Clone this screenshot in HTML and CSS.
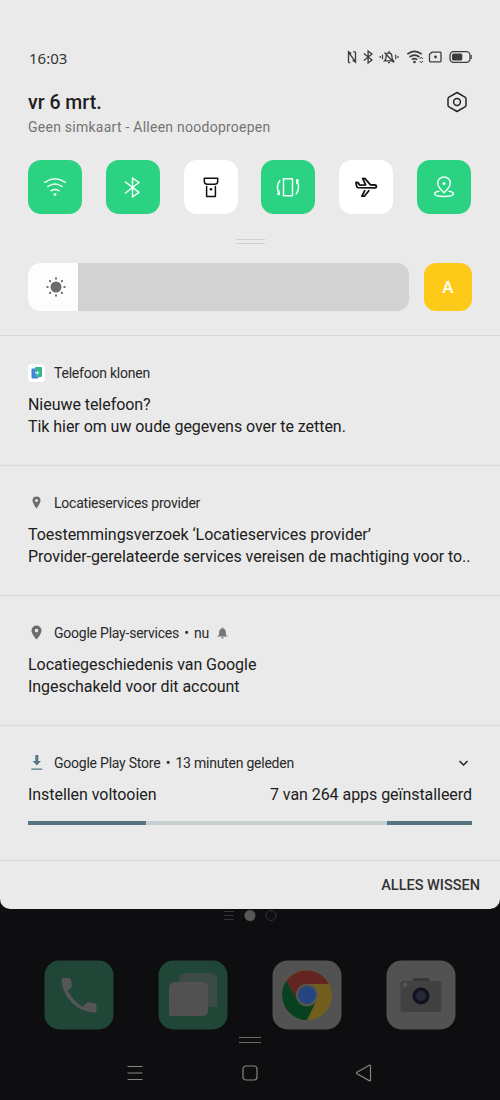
FILE: index.html
```html
<!DOCTYPE html>
<html lang="nl">
<head>
<meta charset="utf-8">
<title>Meldingen</title>
<link rel="stylesheet" href="styles.css">
</head>
<body>
<main class="phone">
  <section class="panel">
    <div class="status">
      <span class="time">16:03</span>
      <svg class="status-icons" width="130" height="16" viewBox="0 0 130 16" fill="none" stroke="#3c3c3c" stroke-width="1.3">
        <path d="M6.300 4.500 3.500 2.700V13.300L5.300 14M3.500 3.200 10.500 13V3.300L8.200 2.500M10.500 13 7.500 11.500"/>
        <path d="M18.800 4.500 27 11 23.100 14V2L27 5 18.800 11.500" stroke-width="1.300"/>
        <path d="M39.600 11.800h8.800c-1.500-1.300-1.400-2.500-1.500-4.700-.2-2.400-1.300-3.300-2.900-3.300s-2.700.9-2.900 3.300c-.1 2.200 0 3.400-1.500 4.700zM44 2v1.500M43 13.600h2M39.500 3.500l9.300 10" stroke-width="1.300"/>
        <path d="M37.500 5.800v4.500M35.200 7v2M50.700 5.800v4.500M53 7v2" stroke-width="1.200"/>
        <path d="M62.300 5.200Q69.500-.6 76.700 5.200M64.500 8Q69.500 4.200 74.500 8M66.800 10.600Q69.500 8.700 72.200 10.600" stroke-width="1.600"/>
        <circle cx="69.500" cy="13" r="1.300" fill="#3c3c3c" stroke="none"/>
        <path d="m74.700 10 1.600-1.800 1.600 1.800M74.700 12l1.600 1.800 1.600-1.800" stroke-width="1"/>
        <path d="M87 3.200h8.200q.8 0 .8.800v8q0 .8-.8.800H85.300q-.8 0-.8-.8V5.200z"/><circle cx="90.500" cy="8" r="1.400" fill="#3c3c3c" stroke="none"/>
        <rect x="105" y="2.600" width="20" height="10.800" rx="3.600"/><rect x="107" y="4.600" width="10.300" height="6.800" rx="1.500" fill="#3c3c3c" stroke="none"/><path d="M126.200 6v4" stroke-width="1.100"/>
      </svg>
    </div>
    <header class="heading">
      <div>
        <h1 class="date">vr 6 mrt.</h1>
        <p class="network">Geen simkaart - Alleen noodoproepen</p>
      </div>
      <svg class="settings" width="22" height="22" viewBox="0 0 22 22" fill="none" stroke="#252525" stroke-width="1.5" stroke-linejoin="round"><path d="m11 1.500 8 4.600q1 .6 1 1.600v6.600q0 1-1 1.600l-8 4.600-8-4.600q-1-.6-1-1.600V7.700q0-1 1-1.600z"/><circle cx="11" cy="11" r="3.400"/></svg>
    </header>
    <div class="tiles">
      <div class="tile on"><svg viewBox="0 0 54 54"><path d="M16.800 22.300Q27 15.200 37.200 22.300M19.800 26.500Q27 21.600 34.200 26.500M23 30.800Q27 28.200 31 30.800"/><circle class="solid" cx="27" cy="34.500" r="1.400"/></svg></div>
      <div class="tile on"><svg viewBox="0 0 54 54"><path d="M19.500 22 33 32.300 26.500 37V18L33 22.500 19.500 33"/></svg></div>
      <div class="tile"><svg viewBox="0 0 54 54"><path d="M20.300 18.200h13.400v3q0 3-3 3h-7.400q-3 0-3-3zM22.600 26.500v10h8.800v-10"/><circle class="solid" cx="27" cy="29.300" r="1.300"/></svg></div>
      <div class="tile on"><svg viewBox="0 0 54 54"><rect x="22.500" y="18.700" width="9" height="17"/><path d="M18.800 20.500q-4.600 6.500-.4 13.500M35.200 33.900q4.600-6.500.4-13.500"/><path class="solid" d="M18.900 30v5.300l-3.300-.8zM35.100 24.400v-5.300l3.300.8z"/></svg></div>
      <div class="tile dark-icon"><svg viewBox="0 0 54 54"><path d="m17 22.500 2 .1 1.600 2.500 6-.2-2.900-6.400 2.300.1 5.500 6.300 4.500.1q1.500.1 1.500 1.400t-1.500 1.400L19 27.700q-1.300-.2-1.400-1.700zM25.800 30.700l-2.900 5.500h2.500l4.400-5.500"/></svg></div>
      <div class="tile on"><svg viewBox="0 0 54 54"><path d="M27 32.700q-6.300-5.800-6.300-9.500a6.300 6.300 0 0 1 12.600 0q0 3.700-6.300 9.500z"/><circle class="solid" cx="27" cy="23.500" r="1.500"/><path d="M22 31.200q-4.500.8-4.500 2.600c0 3.600 19 3.600 19 0q0-1.800-4.500-2.600"/></svg></div>
    </div>
    <div class="grip"></div>
    <div class="brightness">
      <div class="slider"><div class="level"><svg width="22" height="22" viewBox="0 0 22 22"><circle cx="11" cy="11" r="5.500" fill="#6b6b6b"/><path d="M11 2v1M11 19v1M2 11h1M19 11h1M4.800 4.800l.6.600M16.600 16.600l.6.600M4.800 17.200l.6-.6M16.600 5.400l.6-.6" stroke="#444" stroke-width="1.500" stroke-linecap="round"/></svg></div></div>
      <div class="auto">A</div>
    </div>
    <article class="note">
      <div class="app"><svg class="app-icon" width="17" height="18" viewBox="0 0 17 18"><rect width="17" height="18" rx="4" fill="#fff"/><rect x="3.500" y="4.500" width="7" height="10" rx="1" fill="#467fe8"/><rect x="7" y="3" width="7" height="10" rx="1" fill="#32b58d"/><path d="M7 8h2V6.500L11.500 8.700 9 11V9.500H7z" fill="#c4eee8"/></svg><span class="name">Telefoon klonen</span></div>
      <p class="line">Nieuwe telefoon?</p>
      <p class="line">Tik hier om uw oude gegevens over te zetten.</p>
    </article>
    <article class="note">
      <div class="app"><svg class="app-icon" width="17" height="18" viewBox="0 0 17 18"><path fill="#6d6d6d" fill-rule="evenodd" d="M8.500 2.500a4 4 0 0 0-4 4c0 3 4 8 4 8s4-5 4-8a4 4 0 0 0-4-4zm0 2.500a1.500 1.500 0 1 1 0 3 1.500 1.500 0 0 1 0-3z"/></svg><span class="name">Locatieservices provider</span></div>
      <p class="line">Toestemmingsverzoek ‘Locatieservices provider’</p>
      <p class="line">Provider-gerelateerde services vereisen de machtiging voor to..</p>
    </article>
    <article class="note">
      <div class="app"><svg class="app-icon" width="17" height="18" viewBox="0 0 17 18"><path fill="#6d6d6d" fill-rule="evenodd" d="M8.500 1.500a5 5 0 0 0-5 5c0 3.700 5 9 5 9s5-5.300 5-9a5 5 0 0 0-5-5zm0 3.300a1.800 1.800 0 1 1 0 3.600 1.800 1.800 0 0 1 0-3.600z"/></svg><span class="name">Google Play-services</span><span class="name sep">•</span><span class="name">nu</span><svg class="bell" width="11" height="12" viewBox="0 0 11 12"><path fill="#777" d="M5.500.5q.8 0 .9 1 2.500.7 2.500 3.500v3l1.600 1v.6H.5V9l1.600-1V5q0-2.800 2.500-3.500 .1-1 .9-1zM4 10.300h3q-.3 1.300-1.500 1.300T4 10.300z"/></svg></div>
      <p class="line">Locatiegeschiedenis van Google</p>
      <p class="line">Ingeschakeld voor dit account</p>
    </article>
    <article class="note progress-note">
      <div class="app"><svg class="app-icon" width="17" height="18" viewBox="0 0 17 18"><path fill="#557984" d="M7.300 1h3v6h2.700l-4.200 4.500L4.600 7h2.700zM3.300 14.500h11v1.300h-11z"/></svg><span class="name">Google Play Store</span><span class="name sep">•</span><span class="name">13 minuten geleden</span><svg class="chevron" width="11" height="8" viewBox="0 0 11 8" fill="none" stroke="#222" stroke-width="1.500"><path d="m1.500 2 4 4 4-4"/></svg></div>
      <div class="progress-text"><p class="line">Instellen voltooien</p><p class="line">7 van 264 apps geïnstalleerd</p></div>
      <div class="bar"><span class="bar-start"></span><span class="bar-end"></span></div>
    </article>
    <footer class="clear"><span>ALLES WISSEN</span></footer>
  </section>
  <section class="home">
    <svg class="pages" width="54" height="14" viewBox="0 0 54 14" fill="none" stroke="#343436"><path d="M1 2.500h10M1 6.500h10M1 10.500h10"/><circle cx="27" cy="6.500" r="5.500" fill="#575757" stroke="none"/><circle cx="48" cy="6.500" r="5"/></svg>
    <div class="dock">
      <svg viewBox="0 0 70 70"><rect x=".5" y=".5" width="69" height="69" rx="15" fill="#1f4637"/><path fill="#565656" d="M19 18h6q1.500 0 2 1.500l.8 6q.1 1.500-1 2.500L23.500 30.500Q30 42 39 47l3.500-4q1-1 2.500-.8l6 1.200q1.500.4 1.500 2V51q0 1.500-1.500 1.500C33 52.500 18 36 17.500 19.500q0-1.500 1.500-1.500z"/></svg>
      <svg viewBox="0 0 70 70"><rect x=".5" y=".5" width="69" height="69" rx="15" fill="#1f4637"/><path fill="#3c4b46" d="M27 13h26q6 0 6 6v27q0 1-1 1H21V19q0-6 6-6z"/><path fill="#515151" d="M17 22h27q6 0 6 6v22q0 6-6 6H12q-1 0-1-1V28q0-6 6-6z"/></svg>
      <svg viewBox="0 0 70 70"><rect x=".5" y=".5" width="69" height="69" rx="15" fill="#525252"/><circle cx="35" cy="35" r="25" fill="#735f1d"/><path fill="#632522" d="M14.500 20.700A25 25 0 0 1 57 24H35a11 11 0 0 0-9.500 16.500z"/><path fill="#07411f" d="M14.500 20.700 25.500 40.500A11 11 0 0 0 43.500 42.500L35 60A25 25 0 0 1 14.500 20.700z"/><circle cx="35" cy="35" r="11" fill="#555"/><circle cx="35" cy="35" r="9" fill="#25457e"/></svg>
      <svg viewBox="0 0 70 70"><rect x=".5" y=".5" width="69" height="69" rx="15" fill="#525252"/><rect x="26.500" y="18" width="17" height="5" rx="1.500" fill="#383838"/><rect x="14.500" y="21" width="41" height="31" rx="3" fill="#414141"/><circle cx="19" cy="25" r="2.400" fill="#555"/><circle cx="35" cy="36" r="8.500" fill="#111120"/><circle cx="35" cy="36" r="5" fill="#282936"/></svg>
    </div>
    <div class="grip home-grip"></div>
    <nav class="nav">
      <svg width="16" height="16" viewBox="0 0 16 16"><path d="M.5 1.500h15M.5 8h15M.5 14.500h15"/></svg>
      <svg width="16" height="16" viewBox="0 0 16 16"><rect x="1" y="1" width="14" height="14" rx="3"/></svg>
      <svg width="16" height="16" viewBox="0 0 16 16"><path d="M1 7.200 13.200.3q1.300-.6 1.300.8v13.800q0 1.400-1.300.7L1 8.800q-1-.8 0-1.600z"/></svg>
    </nav>
  </section>
</main>
</body>
</html>
```

FILE: styles.css
```css
* { box-sizing: border-box; }
body { margin: 0; background: #0b0b0d; font-family: Roboto, "Liberation Sans", sans-serif; color: #202020; }
h1, p { margin: 0; }
svg { display: block; flex: none; }
.phone { width: 500px; height: 1100px; overflow: hidden; background: linear-gradient(#060608, #0e0e10 60%); }
.panel { height: 909px; background: #eaeaea; border-radius: 0 0 10px 10px; overflow: hidden; }
.status { height: 88px; padding: 49px 28px 0 29px; display: flex; justify-content: space-between; align-items: flex-start; }
.time { font: 15px/18px "Noto Sans", sans-serif; color: #333; }
.status-icons { overflow: visible; margin-right: -3px; }
.heading { height: 72px; padding: 3px 32px 0 28px; display: flex; justify-content: space-between; }
.date { font-size: 19.5px; line-height: 23px; font-weight: 500; }
.network { margin-top: 4px; font-size: 14px; line-height: 18px; letter-spacing: 0.25px; color: #747474; }
.tiles { height: 54px; padding: 0 29px 0 28px; display: flex; justify-content: space-between; }
.tile { width: 54px; height: 54px; border-radius: 13px; background: #fff; }
.tile svg { width: 54px; height: 54px; fill: none; stroke: #111; stroke-width: 1.5; stroke-linejoin: round; stroke-linecap: round; }
.tile .solid { fill: #111; stroke: none; }
.tile.dark-icon svg { stroke-width: 1.8; }
.tile.on { background: #2bd282; }
.tile.on svg { stroke: #f4fff9; }
.tile.on .solid { fill: #f4fff9; }
.grip { width: 29px; height: 5px; margin: 25px auto 0; border: solid #cfcfcf; border-width: 1px 0; }
.brightness { height: 92px; padding: 19px 28px 25px; display: flex; gap: 15px; border-bottom: 1px solid #d9d9d9; }
.slider { flex: 1; height: 48px; border-radius: 12px; background: #d2d2d2; overflow: hidden; }
.level { width: 50px; height: 48px; padding: 13px 0 0 17px; background: #fdfdfd; }
.auto { width: 48px; height: 48px; border-radius: 12px; background: #fdca1a; color: #fff; font-size: 17px; line-height: 49px; font-weight: 500; text-align: center; }
.note { height: 130px; padding: 28px 28px 0; border-bottom: 1px solid #d9d9d9; }
.app { display: flex; align-items: center; height: 18px; }
.app-icon { margin-right: 9px; }
.name { font-size: 14px; line-height: 18px; letter-spacing: -0.23px; white-space: nowrap; color: #292929; }
.sep { width: 15px; text-align: center; }
.bell { margin-left: 8px; }
.chevron { margin-left: auto; margin-right: 3px; }
.line { font-size: 16px; line-height: 22px; letter-spacing: -0.05px; white-space: nowrap; }
.app + .line { margin-top: 12px; }
.progress-note { height: 135px; }
.progress-text { display: flex; justify-content: space-between; margin-top: 12px; }
.bar { display: flex; justify-content: space-between; height: 4px; margin-top: 15px; background: #c5cfd0; }
.bar-start { width: 118px; background: #55747f; }
.bar-end { width: 85px; background: #55747f; }
.clear { height: 48px; padding: 15px 20px 0; text-align: right; font-size: 14.5px; line-height: 20px; font-weight: 500; color: #333; }
.home { height: 191px; }
.pages { margin: 0 0 0 223px; }
.dock { display: flex; justify-content: space-between; padding: 37px 44px 0; }
.dock svg { width: 70px; height: 70px; }
.home-grip { width: 22px; height: 6px; margin-top: 7px; border-color: #6a6a6a; }
.nav { display: flex; justify-content: space-between; padding: 22px 128px 0 127px; }
.nav svg { fill: none; stroke: #858585; stroke-width: 1.2; overflow: visible; }
```
